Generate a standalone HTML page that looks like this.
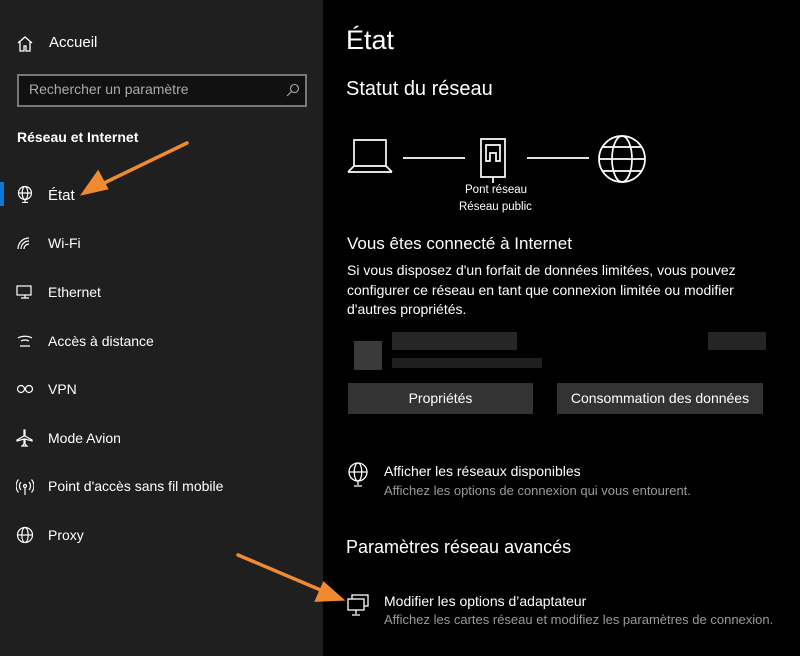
<!DOCTYPE html><html><head><meta charset="utf-8"><style>
body{margin:0;width:800px;height:656px;background:#000;font-family:"Liberation Sans",sans-serif;color:#fff;position:relative;overflow:hidden}
.sb{position:absolute;left:0;top:0;width:323px;height:656px;background:#1f1f1f}
.t{position:absolute;white-space:nowrap}
.nav{position:absolute;left:48px;font-size:14px}
.ic{position:absolute;left:16px}
.btn{position:absolute;top:383px;height:31px;background:#333;font-size:14px;text-align:center;line-height:31px}
.sub{color:#9a9a9a;font-size:13px}
</style></head><body>
<div class="sb"></div>
<svg class="ic" style="top:35px" width="18" height="18" viewBox="0 0 18 18" fill="none" stroke="#fff" stroke-width="1.3"><path d="M2 8L9 2l7 6M4 7v9h4v-5h2v5h4V7"/></svg>
<div class="t" style="left:49px;top:34px;font-size:15px">Accueil</div>
<div class="t" style="left:17px;top:74px;width:286px;height:29px;border:2px solid #777;background:#111"></div>
<div class="t" style="left:29px;top:81px;font-size:14px;color:#aaa">Rechercher un paramètre</div>
<svg class="t" style="left:286px;top:83px" width="14" height="14" viewBox="0 0 14 14" fill="none" stroke="#aaa" stroke-width="1.1"><circle cx="8.5" cy="5.5" r="4"/><path d="M5.5 8.5L1 13"/></svg>
<div class="t" style="left:17px;top:129px;font-size:14px;font-weight:bold">Réseau et Internet</div>
<div class="t" style="left:0;top:182px;width:4px;height:24px;background:#0a78d7"></div>
<svg class="ic" style="top:185px" width="18" height="18" viewBox="0 0 18 18" fill="none" stroke="#fff" stroke-width="1.2"><circle cx="9" cy="8" r="6.5"/><ellipse cx="9" cy="8" rx="2.8" ry="6.5"/><path d="M2.5 8h13M9 14.5v3M6 17.5h6"/></svg>
<div class="nav t" style="top:187px;font-size:15px">État</div>
<svg class="ic" style="top:236px" width="16" height="14" viewBox="0 0 16 14" fill="none" stroke="#fff" stroke-width="1.2"><path d="M2 13A11 11 0 0 1 13 2M5 13A8 8 0 0 1 13 5M8 13A5 5 0 0 1 13 8"/></svg>
<div class="nav t" style="top:235px">Wi-Fi</div>
<svg class="ic" style="top:285px" width="18" height="16" viewBox="0 0 18 16" fill="none" stroke="#fff" stroke-width="1.2"><rect x="1" y="1" width="14" height="9"/><path d="M5 13h8M9 10v3"/></svg>
<div class="nav t" style="top:284px">Ethernet</div>
<svg class="ic" style="top:333px" width="18" height="16" viewBox="0 0 18 16" fill="none" stroke="#fff" stroke-width="1.2"><path d="M2 5a10 6 0 0 1 14 0M5 8a6 4 0 0 1 8 0M4 13h10"/></svg>
<div class="nav t" style="top:333px">Accès à distance</div>
<svg class="ic" style="top:381px" width="18" height="16" viewBox="0 0 18 16" fill="none" stroke="#fff" stroke-width="1.2"><circle cx="5" cy="8" r="3.5"/><circle cx="13" cy="8" r="3.5"/></svg>
<div class="nav t" style="top:381px">VPN</div>
<svg class="ic" style="top:429px" width="18" height="18" viewBox="0 0 18 18" fill="none" stroke="#fff" stroke-width="1.2"><path d="M8 1v6L1 11v1l7-2v5l-2 2h5l-2-2v-5l7 2v-1L9 7V1z"/></svg>
<div class="nav t" style="top:430px">Mode Avion</div>
<svg class="ic" style="top:478px" width="18" height="18" viewBox="0 0 18 18" fill="none" stroke="#fff" stroke-width="1.2"><circle cx="9" cy="8" r="1.5"/><path d="M9 9.5V17M5 4a6 6 0 0 0 0 8M13 4a6 6 0 0 1 0 8M2.5 1.5a10 10 0 0 0 0 13M15.5 1.5a10 10 0 0 1 0 13"/></svg>
<div class="nav t" style="top:478px">Point d'accès sans fil mobile</div>
<svg class="ic" style="top:526px" width="18" height="18" viewBox="0 0 18 18" fill="none" stroke="#fff" stroke-width="1.2"><circle cx="9" cy="9" r="7.5"/><ellipse cx="9" cy="9" rx="3.2" ry="7.5"/><path d="M1.5 9h15"/></svg>
<div class="nav t" style="top:527px">Proxy</div>

<div class="t" style="left:346px;top:25px;font-size:27px">État</div>
<div class="t" style="left:346px;top:78px;font-size:20px">Statut du réseau</div>
<svg class="t" style="left:346px;top:134px" width="305" height="52" viewBox="0 0 305 52" fill="none" stroke="#fff" stroke-width="1.7"><path d="M8 6h32v26H8zM2 38l6-6M46 38l-6-6M2 38h44"/><path d="M57 24h62M181 24h62"/><path d="M135 5h24v38h-24zM140 11h14v16h-4v-8h-6v8h-4zM147 43v6"/><circle cx="276" cy="25" r="23"/><ellipse cx="276" cy="25" rx="10" ry="23"/><path d="M253 25h46M257 13h38M257 37h38"/></svg>
<div class="t" style="left:465px;top:184px;font-size:11.5px">Pont réseau</div>
<div class="t" style="left:459px;top:201px;font-size:11.5px">Réseau public</div>
<div class="t" style="left:347px;top:234px;font-size:17px">Vous êtes connecté à Internet</div>
<div class="t" style="left:347px;top:261px;font-size:14px;line-height:19.5px">Si vous disposez d'un forfait de données limitées, vous pouvez<br>configurer ce réseau en tant que connexion limitée ou modifier<br>d'autres propriétés.</div>
<div class="t" style="left:354px;top:341px;width:28px;height:29px;background:#3a3a3a"></div>
<div class="t" style="left:392px;top:332px;width:125px;height:18px;background:#262626"></div>
<div class="t" style="left:392px;top:358px;width:150px;height:10px;background:#1f1f1f"></div>
<div class="t" style="left:708px;top:332px;width:58px;height:18px;background:#252525"></div>
<div class="btn" style="left:348px;width:185px">Propriétés</div>
<div class="btn" style="left:557px;width:206px">Consommation des données</div>
<svg class="t" style="left:347px;top:462px" width="22" height="26" viewBox="0 0 22 26" fill="none" stroke="#fff" stroke-width="1.3"><circle cx="11" cy="10" r="9"/><ellipse cx="11" cy="10" rx="3.8" ry="9"/><path d="M2 10h18M11 19v4M7 24h8"/></svg>
<div class="t" style="left:384px;top:463px;font-size:14px">Afficher les réseaux disponibles</div>
<div class="t sub" style="left:384px;top:483px">Affichez les options de connexion qui vous entourent.</div>
<div class="t" style="left:346px;top:537px;font-size:18px">Paramètres réseau avancés</div>
<svg class="t" style="left:347px;top:594px" width="24" height="24" viewBox="0 0 24 24" fill="none" stroke="#fff" stroke-width="1.3"><rect x="5" y="1" width="16" height="11"/><rect x="1" y="5" width="16" height="11" fill="#000"/><path d="M9 16v4M5 21h8"/></svg>
<div class="t" style="left:384px;top:593px;font-size:14px">Modifier les options d’adaptateur</div>
<div class="t sub" style="left:384px;top:612px">Affichez les cartes réseau et modifiez les paramètres de connexion.</div>

<svg class="t" style="left:0;top:0" width="800" height="656" viewBox="0 0 800 656"><g stroke="#f08a30" stroke-width="3.5" fill="#f08a30" stroke-linecap="round"><path d="M187 143L100 185" fill="none"/><path d="M84 193l14-20 8 15z"/><path d="M238 555L323 591" fill="none"/><path d="M341 599l-24 1 7-16z"/></g></svg>
</body></html>
